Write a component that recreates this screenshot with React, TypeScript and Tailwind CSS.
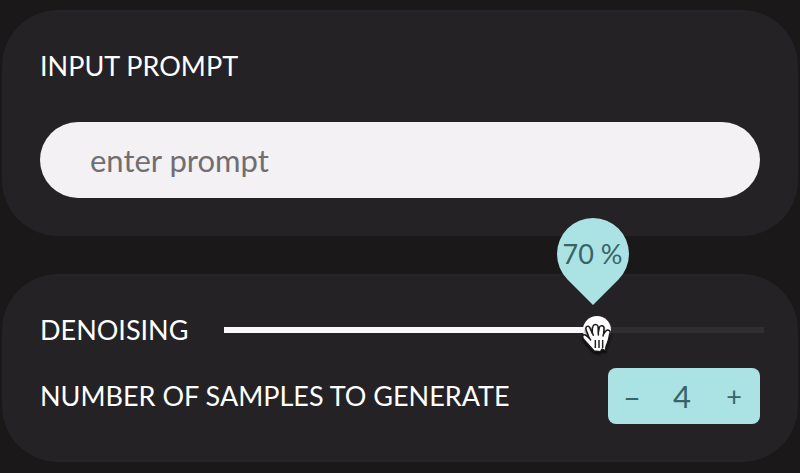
import { useState } from "react";
import type { CSSProperties } from "react";

function GrabHand() {
  return (
    <svg
      viewBox="34 54 93 96"
      className="h-8 w-[31px] drop-shadow-[0_2px_1px_rgba(0,0,0,0.7)]"
      aria-hidden="true"
    >
      <path
        d="M73 141C65 130 49 116 41 104C36 96 42 88 49 94L58 102C57 94 51 83 49 76C47 68 56 63 60 70L68 88C68 80 67 72 70 67C73 59 83 60 85 67L86 85L89 71C91 62 103 64 103 72L102 89L108 82C113 75 123 79 121 87C118 96 118 108 113 117C109 124 108 129 107 141L98 135L92 143Z"
        fill="#fff"
        stroke="#1c1a1b"
        strokeWidth="4.5"
        strokeLinejoin="round"
      />
      <path
        d="M58 101L63 108M68 86L71 94M86 84V93M102 88L100 96"
        fill="none"
        stroke="#1c1a1b"
        strokeWidth="4.5"
        strokeLinecap="round"
      />
      <path d="M77 108V132M88 108V132M99 108V132" stroke="#242225" strokeWidth="4.5" />
    </svg>
  );
}

function DenoisingSlider() {
  const [value, setValue] = useState(70);

  return (
    <div className="relative -mr-1 flex flex-1 items-center">
      <input
        id="denoising"
        type="range"
        min={0}
        max={100}
        value={value}
        onChange={(e) => setValue(Number(e.target.value))}
        style={{ "--fill": `${value}%` } as CSSProperties}
        className="h-7 w-full cursor-grab appearance-none bg-transparent outline-none [&::-webkit-slider-runnable-track]:h-1.5 [&::-webkit-slider-runnable-track]:bg-[linear-gradient(to_right,#fbf8fb_var(--fill),#302e31_var(--fill))] [&::-webkit-slider-thumb]:-mt-[11px] [&::-webkit-slider-thumb]:size-7 [&::-webkit-slider-thumb]:appearance-none [&::-webkit-slider-thumb]:rounded-full [&::-webkit-slider-thumb]:bg-white"
      />
      <div className="pointer-events-none absolute inset-y-0 right-[18px] left-[10px]">
        <div className="absolute top-1/2" style={{ left: `${value}%` }}>
          <output
            htmlFor="denoising"
            className="absolute bottom-6 left-0 flex h-[88px] w-[72px] -translate-x-1/2 justify-center text-[27px] leading-[72px] whitespace-nowrap text-[#376466]"
          >
            <svg viewBox="0 0 72 88" className="absolute inset-0" aria-hidden="true">
              <path
                d="M36 87L10.5 61.5A36 36 0 1 1 61.5 61.5Z"
                fill="#abe3e5"
              />
            </svg>
            <span className="relative">{value} %</span>
          </output>
          <div className="absolute -top-2 -left-3">
            <GrabHand />
          </div>
        </div>
      </div>
    </div>
  );
}

function SampleStepper() {
  const [samples, setSamples] = useState(4);

  return (
    <div
      role="group"
      aria-labelledby="samples-label"
      className="flex h-14 w-[152px] items-center justify-between rounded-lg bg-[#abe3e5] px-2 text-[31px] leading-9 text-[#376466]"
    >
      <button
        type="button"
        aria-label="Fewer samples"
        onClick={() => setSamples(Math.max(1, samples - 1))}
        className="w-8"
      >
        –
      </button>
      <span>{samples}</span>
      <button
        type="button"
        aria-label="More samples"
        onClick={() => setSamples(samples + 1)}
        className="w-9 text-[27px]"
      >
        +
      </button>
    </div>
  );
}

export default function App() {
  const [prompt, setPrompt] = useState("");

  return (
    <main className="flex min-h-screen flex-col gap-[38px] bg-[#1b1819] px-0.5 py-2.5 font-[Lato,sans-serif] text-[27px] leading-9 text-white">
      <section className="flex flex-col gap-[38px] rounded-[56px] bg-[#242225] p-[38px]">
        <label htmlFor="prompt">INPUT PROMPT</label>
        <input
          id="prompt"
          type="text"
          placeholder="enter prompt"
          value={prompt}
          onChange={(e) => setPrompt(e.target.value)}
          className="h-[76px] w-full rounded-full bg-[#f3f1f4] px-[50px] text-[31px] text-[#242225] outline-none placeholder:text-[#706e70]"
        />
      </section>

      <section className="flex flex-col gap-5 rounded-[56px] bg-[#242225] p-[38px]">
        <div className="flex h-9 items-center gap-9">
          <label htmlFor="denoising">DENOISING</label>
          <DenoisingSlider />
        </div>
        <div className="flex items-center justify-between">
          <span id="samples-label">NUMBER OF SAMPLES TO GENERATE</span>
          <SampleStepper />
        </div>
      </section>
    </main>
  );
}
